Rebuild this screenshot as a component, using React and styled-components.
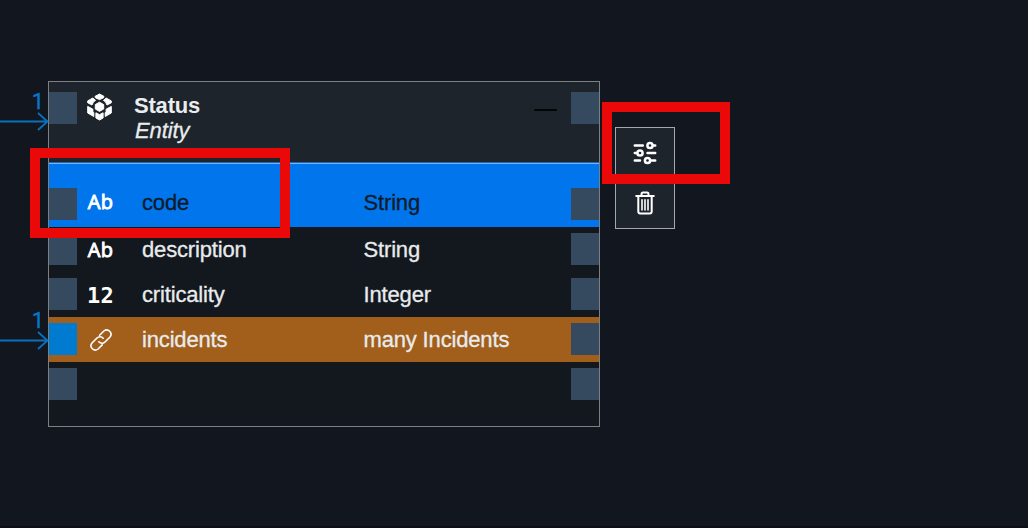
import React from "react";
import styled, { createGlobalStyle } from "styled-components";

const Global = createGlobalStyle`
  * { box-sizing: border-box; }
  body { margin: 0; background: #12171f; font-family: "Liberation Sans", Arial, sans-serif; }
`;

const Canvas = styled.main`
  position: relative;
  width: 1028px;
  height: 528px;
  overflow: hidden;
  background: #12171f;
  border-bottom: 2px solid #0e0d19;
`;

const Node = styled.section`
  position: absolute;
  left: 48px;
  top: 81px;
  width: 552px;
  height: 346px;
  display: flex;
  flex-direction: column;
  background: #12181e;
  border: 1px solid #7d8083;
`;

const Header = styled.header`
  display: flex;
  height: 80px;
  padding-top: 10px;
  background: #1d242b;
`;

const HeaderIcon = styled.div`
  width: 57px;
  padding: 1px 0 0 9px;
  svg { display: block; }
`;

const Titles = styled.div`
  flex: 1;
  color: #eaecee;
  font-size: 22px;
  line-height: 25px;
`;

const Title = styled.div`
  font-weight: 700;
  letter-spacing: -0.2px;
  margin-top: 1px;
`;

const Subtitle = styled.div`
  font-style: italic;
  padding-left: 1px;
  letter-spacing: -0.1px;
  -webkit-text-stroke: 0.3px currentColor;
`;

const Collapse = styled.div`
  width: 23px;
  height: 2px;
  margin: 17px 14px 0 0;
  border-radius: 1px;
  background: #030405;
`;

const Handle = styled.div`
  flex: none;
  width: 28px;
  height: 32px;
  background: ${(p) => (p.$active ? "#007bd0" : "#364a5f")};
`;

const Row = styled.div`
  display: flex;
  align-items: flex-start;
  flex: none;
  height: ${(p) => p.$height || 45}px;
  padding-top: ${(p) => p.$top || 6}px;
  background: ${(p) => p.$bg || "transparent"};
  color: ${(p) => p.$color || "#e9ebed"};
  box-shadow: ${(p) => (p.$line ? "inset 0 1px #1768c4, inset 0 2px #7db3ef" : "none")};
`;

const TypeIcon = styled.div`
  width: 47px;
  height: 32px;
  flex: none;
  display: flex;
  justify-content: center;
  align-items: center;
  color: #fff;
  font: ${(p) => (p.$numeric ? '700 22px/30px "DejaVu Sans Mono"' : '400 20px/28px "Open Sans"')}, sans-serif;
  -webkit-text-stroke: ${(p) => (p.$numeric ? 0 : 0.9)}px currentColor;
  padding-top: ${(p) => p.$drop || 0}px;
`;

const TypeMark = styled.span`
  display: block;
  margin-top: -4px;
  letter-spacing: 0.3px;
`;

const Name = styled.div`
  width: 221.5px;
  margin-left: 18px;
  padding-top: ${(p) => p.$drop || 0}px;
  font-size: 22px;
  line-height: 30px;
  letter-spacing: -0.16px;
  -webkit-text-stroke: 0.3px currentColor;
`;

const Kind = styled(Name)`
  width: 207.5px;
  margin-left: 0;
  white-space: nowrap;
`;

const Tools = styled.div`
  position: absolute;
  left: 615px;
  top: 127px;
  width: 60px;
  height: 102px;
  display: flex;
  flex-direction: column;
  border: 1px solid #a5a8aa;
  background: #1d242b;
`;

const Tool = styled.button`
  flex: 1;
  display: flex;
  align-items: center;
  justify-content: center;
  padding: 0;
  border: 0;
  background: none;
`;

const Highlight = styled.div`
  position: absolute;
  left: ${(p) => p.$x}px;
  top: ${(p) => p.$y}px;
  width: ${(p) => p.$w}px;
  height: ${(p) => p.$h}px;
  border: 10px solid #ea0808;
`;

const Link = styled.div`
  position: absolute;
  left: 0;
  top: ${(p) => p.$y}px;
  width: 49px;
  display: flex;
  flex-direction: column;
  svg { display: block; }
`;

const Cardinality = styled.span`
  align-self: flex-end;
  margin-right: 5px;
  color: #0877ca;
  font: 400 22px/30px Roboto, sans-serif;
  height: 28px;
  -webkit-text-stroke: 0.4px currentColor;
`;

const CubeIcon = () => (
  <svg width="27" height="28" viewBox="0 0 27 28" fill="#fff" stroke="#fff" strokeWidth="1" strokeLinejoin="round">
    <path d="M13.5 1 18 3.4 17.6 4.8 13.5 6.6 9.4 4.8 9 3.4Z" />
    <path d="M6.8 5 9.6 7.4 7.6 8.8 6 12 1.7 9.8V7.9Z" />
    <path d="M20.2 5 25.3 7.9V9.8L21 12 19.4 8.8 17.4 7.4Z" />
    <path d="M13.5 9.2 17.7 11.6V16L13.5 18.4 9.3 16V11.6Z" />
    <path d="M1.7 13.4 6.9 16.2V18.8L7.8 19.6V23.5L1.7 20Z" />
    <path d="M25.3 13.4 20.1 16.2V18.8L19.2 19.6V23.5L25.3 20Z" />
    <path d="M9.9 19.8 13.5 21.7 17.1 19.8V25L13.5 27 9.9 25Z" />
  </svg>
);

const ChainIcon = () => (
  <svg width="24" height="24" viewBox="0 0 24 24" fill="none" stroke="#fff" strokeWidth="1.6" strokeLinecap="round">
    <path d="M9.8 13.8A4.2 4.2 0 0 0 16 14L21 9A4.3 4.3 0 0 0 14.9 3L10.6 7.3" />
    <path d="M14.2 10.2A4.2 4.2 0 0 0 8 10L3 15A4.3 4.3 0 0 0 9.1 21L13.2 16.9" />
  </svg>
);

const SlidersIcon = () => (
  <svg width="24" height="24" viewBox="0 0 24 24" fill="none" stroke="#fff" strokeWidth="2.5" strokeLinecap="round">
    <path d="M1.8 4.5H9.8M20.3 4.5H22.2M1.8 12H4M14.5 12H22.2M1.8 19.5H7M18 19.5H22.2" />
    <circle cx="17" cy="4.5" r="2.6" />
    <circle cx="7" cy="12" r="2.6" />
    <circle cx="14.5" cy="19.5" r="2.6" />
  </svg>
);

const TrashIcon = () => (
  <svg width="20" height="24" viewBox="0 0 20 24" fill="none" stroke="#fff" strokeWidth="2" strokeLinecap="round" strokeLinejoin="round">
    <path d="M1.2 5H18.8M6.5 4.5V3.3Q6.5 1.6 8 1.6H12Q13.5 1.6 13.5 3.3V4.5M3.3 5.5V20.5Q3.3 22.4 5.3 22.4H14.7Q16.7 22.4 16.7 20.5V5.5" />
    <path d="M7 8.8V19M10 8.8V19M13 8.8V19" strokeWidth="1.6" />
  </svg>
);

const Relation = ({ y }) => (
  <Link $y={y}>
    <Cardinality>1</Cardinality>
    <svg width="49" height="14" viewBox="0 0 49 14" fill="none" stroke="#0870bd" strokeWidth="1.8" overflow="visible">
      <path d="M0 6.5H48M38 -2 47.5 6.5 38 15" />
    </svg>
  </Link>
);

const rows = [
  { icon: "Ab", name: "code", kind: "String", height: 65, top: 26, bg: "#0075ec", color: "#101b29", line: true },
  { icon: "Ab", iconDrop: 6, drop: 2, name: "description", kind: "String" },
  { icon: "12", drop: 2, iconDrop: 7, numeric: true, name: "criticality", kind: "Integer" },
  { icon: <ChainIcon />, drop: 2, iconDrop: 2, name: "incidents", kind: "many Incidents", bg: "#a15f1b", active: true },
  { icon: null, name: "", kind: "" },
];

export default function App() {
  return (
    <Canvas>
      <Global />
      <Node>
        <Header>
          <Handle />
          <HeaderIcon><CubeIcon /></HeaderIcon>
          <Titles>
            <Title>Status</Title>
            <Subtitle>Entity</Subtitle>
          </Titles>
          <Collapse />
          <Handle />
        </Header>
        {rows.map((r, i) => (
          <Row key={i} $height={r.height} $top={r.top} $bg={r.bg} $color={r.color} $line={r.line}>
            <Handle $active={r.active} />
            <TypeIcon $numeric={r.numeric} $drop={r.iconDrop}>
              {typeof r.icon === "string" ? <TypeMark>{r.icon}</TypeMark> : r.icon}
            </TypeIcon>
            <Name $drop={r.drop}>{r.name}</Name>
            <Kind $drop={r.drop}>{r.kind}</Kind>
            <Handle />
          </Row>
        ))}
      </Node>
      <Tools>
        <Tool aria-label="Settings"><SlidersIcon /></Tool>
        <Tool aria-label="Delete"><TrashIcon /></Tool>
      </Tools>
      <Relation y={87} />
      <Relation y={306} />
      <Highlight $x={30} $y={148} $w={260} $h={90} />
      <Highlight $x={602} $y={102} $w={128} $h={82} />
    </Canvas>
  );
}
